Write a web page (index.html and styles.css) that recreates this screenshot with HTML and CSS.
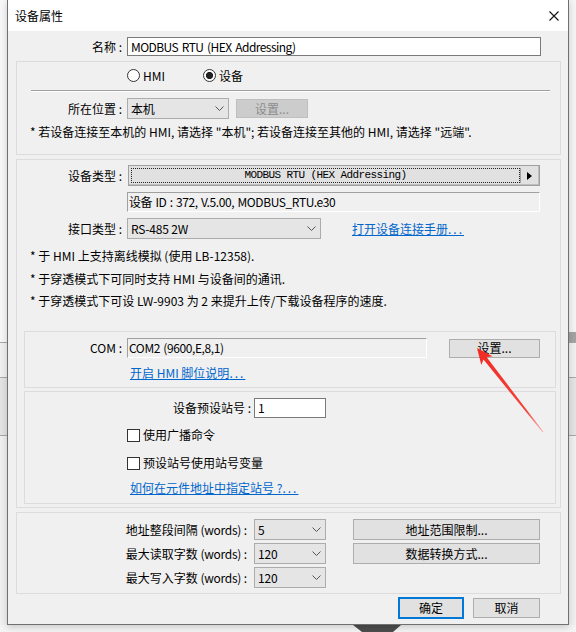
FILE: index.html
```html
<!DOCTYPE html>
<html>
<head>
    <meta charset="utf-8">
    <title>设备属性</title>
    <link rel="stylesheet" href="styles.css">
</head>

<body>
<div class="screen">
    <div class="desk_row">
        <div class="desk_side desk_left">
            <div class="side_top"></div>
            <div class="side_line"></div>
            <div class="side_cell"></div>
            <div class="side_line"></div>
            <div class="side_band"></div>
            <div class="side_line"></div>
            <div class="side_rest"></div>
        </div>

        <div class="dialog">
            <div class="titlebar">
                <span class="title">设备属性</span>
                <svg class="close" width="10" height="10" viewBox="0 0 10 10">
                    <path d="M0.5 0.5 L9.5 9.5 M9.5 0.5 L0.5 9.5" stroke="#111" stroke-width="1.1"/>
                </svg>
            </div>

            <div class="content">
                <div class="row name_row">
                    <span class="lbl w_name">名称 :</span>
                    <div class="textbox name_box">MODBUS RTU (HEX Addressing)</div>
                </div>

                <div class="group g_location">
                    <div class="radios">
                        <span class="radio"><i class="circle"></i>HMI</span>
                        <span class="radio"><i class="circle checked"></i>设备</span>
                    </div>
                    <div class="sep"></div>
                    <div class="row loc_row">
                        <span class="lbl w_top">所在位置 :</span>
                        <div class="combo loc_combo">
                            <span>本机</span>
                            <svg class="chev" width="9" height="5" viewBox="0 0 9 5"><polyline points="0.5,0.5 4.5,4.5 8.5,0.5" fill="none" stroke="#555"/></svg>
                        </div>
                        <button class="btn loc_btn" disabled>设置...</button>
                    </div>
                    <p class="note">* 若设备连接至本机的 HMI, 请选择 &quot;本机&quot;; 若设备连接至其他的 HMI, 请选择 &quot;远端&quot;.</p>
                </div>

                <div class="group g_device">
                    <div class="row type_row">
                        <span class="lbl w_top">设备类型 :</span>
                        <div class="typebtn">
                            <span class="typebtn_text">MODBUS RTU (HEX Addressing)</span>
                            <span class="typebtn_arrow">
                                <svg width="5" height="8" viewBox="0 0 5 8"><polygon points="0,0 5,4 0,8" fill="#000"/></svg>
                            </span>
                        </div>
                    </div>
                    <div class="sunken id_box">设备 ID : 372, V.5.00, MODBUS_RTU.e30</div>
                    <div class="row iface_row">
                        <span class="lbl w_top">接口类型 :</span>
                        <div class="combo iface_combo">
                            <span>RS-485 2W</span>
                            <svg class="chev" width="9" height="5" viewBox="0 0 9 5"><polyline points="0.5,0.5 4.5,4.5 8.5,0.5" fill="none" stroke="#555"/></svg>
                        </div>
                        <a class="link manual_link" href="#">打开设备连接手册<span class="dots">...</span></a>
                    </div>
                    <p class="note n1">* 于 HMI 上支持离线模拟 (使用 LB-12358).</p>
                    <p class="note n2">* 于穿透模式下可同时支持 HMI 与设备间的通讯.</p>
                    <p class="note n3">* 于穿透模式下可设 LW-9903 为 2 来提升上传/下载设备程序的速度.</p>

                    <div class="group g_com">
                        <div class="row com_row">
                            <span class="lbl w_com">COM :</span>
                            <div class="sunken com_box">COM2 (9600,E,8,1)</div>
                            <button class="btn com_btn">设置...</button>
                        </div>
                        <a class="link pin_link" href="#">开启 HMI 脚位说明<span class="dots">...</span></a>
                    </div>

                    <div class="group g_station">
                        <div class="row station_row">
                            <span class="lbl w_station">设备预设站号 :</span>
                            <div class="textbox station_box">1</div>
                        </div>
                        <div class="check c1"><i class="box"></i>使用广播命令</div>
                        <div class="check c2"><i class="box"></i>预设站号使用站号变量</div>
                        <a class="link station_link" href="#">如何在元件地址中指定站号 ?<span class="dots">...</span></a>
                    </div>
                </div>

                <div class="group g_words">
                    <div class="row words_row r1">
                        <span class="lbl w_words">地址整段间隔 <span class="latin">(words)</span> :</span>
                        <div class="combo words_combo">
                            <span>5</span>
                            <svg class="chev" width="9" height="5" viewBox="0 0 9 5"><polyline points="0.5,0.5 4.5,4.5 8.5,0.5" fill="none" stroke="#555"/></svg>
                        </div>
                        <button class="btn words_btn">地址范围限制...</button>
                    </div>
                    <div class="row words_row r2">
                        <span class="lbl w_words">最大读取字数 <span class="latin">(words)</span> :</span>
                        <div class="combo words_combo">
                            <span>120</span>
                            <svg class="chev" width="9" height="5" viewBox="0 0 9 5"><polyline points="0.5,0.5 4.5,4.5 8.5,0.5" fill="none" stroke="#555"/></svg>
                        </div>
                        <button class="btn words_btn">数据转换方式...</button>
                    </div>
                    <div class="row words_row r3">
                        <span class="lbl w_words">最大写入字数 <span class="latin">(words)</span> :</span>
                        <div class="combo words_combo">
                            <span>120</span>
                            <svg class="chev" width="9" height="5" viewBox="0 0 9 5"><polyline points="0.5,0.5 4.5,4.5 8.5,0.5" fill="none" stroke="#555"/></svg>
                        </div>
                    </div>
                </div>

                <div class="footer">
                    <button class="btn ok_btn">确定</button>
                    <button class="btn cancel_btn">取消</button>
                </div>
            </div>
        </div>

        <div class="desk_side desk_right">
            <div class="side_top"></div>
            <div class="side_line"></div>
            <div class="side_cell"></div>
            <div class="side_line"></div>
            <div class="side_band"></div>
            <div class="side_line"></div>
            <div class="side_rest"></div>
        </div>
    </div>

    <div class="desk_bottom">
        <svg class="cursor_shape" width="48" height="7" viewBox="0 0 48 7"><polygon points="0,0 48,0 40,7 9,7" fill="#4d4d4d"/></svg>
    </div>

    <!-- red pointer drawn over the dialog -->
    <svg class="arrow" width="576" height="632" viewBox="0 0 576 632">
        <defs>
            <linearGradient id="arrowFade" x1="477" y1="348" x2="543" y2="432" gradientUnits="userSpaceOnUse">
                <stop offset="0" stop-color="#f22a22"/>
                <stop offset="0.75" stop-color="#f4423c"/>
                <stop offset="1" stop-color="#f9b0b0"/>
            </linearGradient>
        </defs>
        <polygon points="477,348 492.5,356.3 486.7,357.2 543.4,431.7 542.6,432.3 483.5,359.6 481.3,364.9" fill="url(#arrowFade)"/>
    </svg>
</div>
</body>
</html>
```

FILE: styles.css
```css
* {
    box-sizing: border-box;
}

body {
    margin: 0;
    font-family: "Noto Sans CJK SC", sans-serif;
    font-size: 12px;
    line-height: 16px;
    color: #000000;
}

div.screen {
    position: relative;
    width: 576px;
    height: 632px;
    overflow: hidden;
    background-color: #fafafa;
}

div.desk_row {
    display: flex;
    height: 625px;
}

/* bits of the window behind the dialog */
div.desk_side {
    width: 7px;
    flex: none;
    display: flex;
    flex-direction: column;
    background-color: #f0f0f0;
}

.desk_side .side_top {
    height: 342px;
    background-color: #f7f7f7;
}

.desk_right .side_top {
    border-bottom: 10px solid #a3a3a3;
    background-color: #f4f4f4;
}

.desk_side .side_line {
    height: 1px;
    background-color: #a8a8a8;
}

.desk_side .side_cell {
    height: 34px;
}

.desk_side .side_band {
    height: 57px;
    background-color: #e4e4e4;
}

.desk_side .side_rest {
    flex: 1;
}

div.desk_bottom {
    height: 7px;
    padding-left: 353px;
    background-color: #f4f4f4;
}

.cursor_shape {
    display: block;
}

svg.arrow {
    position: absolute;
    left: 0;
    top: 0;
    pointer-events: none;
    z-index: 5;
}

/* dialog window */
div.dialog {
    width: 562px;
    height: 625px;
    flex: none;
    display: flex;
    flex-direction: column;
    background-color: #f0f0f0;
    border: 1px solid #707070;
    border-top: 0;
    box-shadow: 0 2px 7px rgba(0, 0, 0, 0.18);
    position: relative;
    z-index: 1;
}

div.titlebar {
    height: 31px;
    flex: none;
    display: flex;
    align-items: center;
    justify-content: space-between;
    padding: 0 9px 0 7px;
    background-color: #ffffff;
}

.titlebar .close {
    display: block;
}

div.content {
    padding: 6px 7px 0 8px;
}

.row {
    display: flex;
    align-items: center;
}

.lbl {
    flex: none;
    text-align: right;
    white-space: nowrap;
}

.latin {
    letter-spacing: -0.3px;
}

.w_name { width: 106px; margin-right: 5px; }
.w_top { width: 105px; margin-right: 5px; }
.w_com { width: 97px; margin-right: 5px; }
.w_station { width: 226px; margin-right: 3px; }
.w_words { width: 230px; margin-right: 7px; }

.group {
    border: 1px solid #dcdcdc;
}

.textbox {
    height: 19px;
    padding: 0 3px;
    line-height: 17px;
    letter-spacing: -0.55px;
    word-spacing: 1.5px;
    background-color: #ffffff;
    border: 1px solid #7a7a7a;
    white-space: nowrap;
}

.name_box {
    width: 414px;
}

.sunken {
    height: 20px;
    padding-left: 1px;
    line-height: 17px;
    letter-spacing: -0.4px;
    word-spacing: 1px;
    background-color: #f0f0f0;
    border-top: 1px solid #a0a0a0;
    border-left: 1px solid #a0a0a0;
    border-bottom: 1px solid #ffffff;
    border-right: 1px solid #ffffff;
    white-space: nowrap;
}

.combo {
    height: 21px;
    display: flex;
    align-items: center;
    justify-content: space-between;
    padding: 0 4px 0 3px;
    letter-spacing: -0.2px;
    background-color: #e5e5e5;
    border: 1px solid #acacac;
}

.chev {
    display: block;
}

.btn {
    height: 19px;
    padding: 0;
    font-family: inherit;
    font-size: 12px;
    line-height: 16px;
    color: #000000;
    background-color: #e1e1e1;
    border: 1px solid #adadad;
}

.btn:disabled {
    color: #8d8d8d;
    background-color: #cccccc;
    border-color: #bfbfbf;
}

.link {
    color: #0066cc;
    text-decoration: underline;
    white-space: nowrap;
}

.dots {
    letter-spacing: 2px;
}

.note {
    margin: 5px 0 0 0;
    padding-left: 13px;
    white-space: nowrap;
}

/* location group */
div.g_location {
    margin-top: 5px;
    height: 94px;
}

.radios {
    display: flex;
    align-items: center;
    height: 13px;
    margin-top: 7px;
    padding-left: 110px;
}

.radio {
    width: 76px;
    display: flex;
    align-items: center;
    gap: 3px;
}

.circle {
    width: 13px;
    height: 13px;
    flex: none;
    border: 1px solid #333333;
    border-radius: 50%;
    background-color: #ffffff;
}

.circle.checked {
    background: radial-gradient(circle, #222222 3.3px, #ffffff 3.9px);
}

.sep {
    height: 2px;
    margin: 8px 10px 0 14px;
    border-top: 1px solid #a0a0a0;
    border-bottom: 1px solid #ffffff;
}

.loc_row {
    margin-top: 6px;
}

.loc_combo {
    width: 102px;
}

.loc_btn {
    width: 72px;
    margin-left: 7px;
}

/* device group */
div.g_device {
    margin-top: 4px;
    height: 349px;
}

.type_row {
    margin-top: 5px;
}

.type_row .w_top {
    margin-right: 6px;
}

.typebtn {
    width: 412px;
    height: 21px;
    display: flex;
    padding: 2px 1px 2px 2px;
    background-color: #e1e1e1;
    border: 1px solid #a0a0a0;
    box-shadow: inset -1px -1px 0 #bdbdbd;
}

.typebtn_text {
    flex: 1;
    border: 1px dotted #222222;
    text-align: center;
    font-family: "Liberation Mono", monospace;
    font-size: 11px;
    letter-spacing: -0.6px;
    line-height: 13px;
}

.typebtn_arrow {
    width: 18px;
    display: flex;
    align-items: center;
    justify-content: center;
    border-left: 1px solid #a0a0a0;
}

.id_box {
    width: 413px;
    margin: 6px 0 0 110px;
}

.iface_row {
    margin-top: 6px;
}

.iface_combo {
    width: 194px;
}

.manual_link {
    margin-left: 31px;
}

.note.n1 { margin-top: 9px; }
.note.n2 { margin-top: 7px; }
.note.n3 { margin-top: 6px; }

div.g_com {
    height: 57px;
    margin: 22px 4px 0 7px;
}

.com_row {
    margin-top: 6px;
}

.com_box {
    width: 300px;
}

.com_btn {
    width: 91px;
    margin-left: 22px;
}

.pin_link,
.station_link {
    display: block;
    width: max-content;
    margin: 7px 0 0 105px;
}

div.g_station {
    height: 113px;
    margin: 3px 4px 0 7px;
}

.station_row {
    margin-top: 6px;
}

.station_box {
    width: 72px;
    height: 20px;
}

.check {
    display: flex;
    align-items: center;
    gap: 3px;
    padding-left: 102px;
}

.check .box {
    width: 13px;
    height: 13px;
    flex: none;
    border: 1px solid #333333;
    background-color: #ffffff;
}

.check.c1 { margin-top: 9px; }
.check.c2 { margin-top: 12px; }
.station_link { margin-top: 9px; }

/* words group */
div.g_words {
    margin-top: 4px;
    height: 82px;
}

.words_row.r1 { margin-top: 6px; }
.words_row.r2,
.words_row.r3 { margin-top: 3px; }

.words_combo {
    width: 72px;
}

.words_btn {
    width: 187px;
    height: 21px;
    margin-left: 27px;
}

div.footer {
    display: flex;
    align-items: flex-start;
    justify-content: flex-end;
    gap: 9px;
    margin-top: 3px;
    padding-right: 21px;
}

.ok_btn {
    width: 66px;
    height: 22px;
    border: 2px solid #0078d7;
}

.cancel_btn {
    width: 67px;
    height: 20px;
    margin-top: 1px;
}
```
